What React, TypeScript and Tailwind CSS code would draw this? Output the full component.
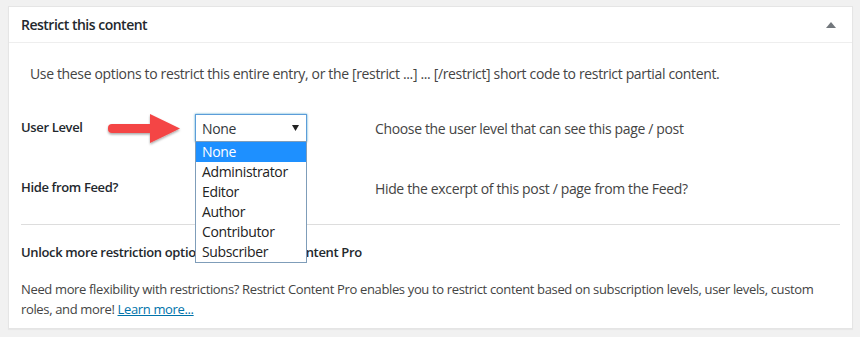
import React from "react";

const options = ["None", "Administrator", "Editor", "Author", "Contributor", "Subscriber"];

export default function App() {
  return (
    <div
      className="w-[860px] h-[337px] bg-[#f1f1f1] pt-[6px] pl-[8px] overflow-hidden"
      style={{ fontFamily: '"Open Sans", "Noto Sans", Arial, sans-serif' }}
    >
      <div className="w-[845px] h-[323px] bg-white border border-[#e5e5e5] shadow-[0_1px_1px_rgba(0,0,0,0.04)] flex flex-col">
        <div className="h-[36px] border-b border-[#eeeeee] flex items-center justify-between pl-[12px] pr-[16px]">
          <span className="text-[14px] font-semibold text-[#23282d] tracking-[-0.5px]">Restrict this content</span>
          <svg width="10" height="6" viewBox="0 0 10 6">
            <polygon points="5,0 10,6 0,6" fill="#72777c" />
          </svg>
        </div>
        <div className="px-[12px] text-[13px] text-[#444] tracking-[-0.35px]">
          <p className="mt-[21px] ml-[9px] leading-[20px] text-[14px]">
            Use these options to restrict this entire entry, or the [restrict ...] ... [/restrict] short code to restrict partial content.
          </p>
          <div className="mt-[14px] relative">
            <div className="h-[60px] flex items-center">
              <div className="w-[174px] font-semibold text-[#23282d]">User Level</div>
              <div className="relative">
                <div className="w-[112px] h-[28px] border border-[#5b9dd9] shadow-[0_0_2px_rgba(30,140,190,0.8)] flex items-center justify-between pl-[6px] pr-[7px] text-[14px] text-[#32373c] bg-white">
                  <span>None</span>
                  <svg width="7" height="6" viewBox="0 0 7 6">
                    <polygon points="0,0 7,0 3.5,6" fill="#222" />
                  </svg>
                </div>
                <div className="absolute left-0 top-[27px] w-[112px] bg-white border border-[#7f9db9] z-10 text-[14px] text-[#222]">
                  {options.map((o, i) => (
                    <div
                      key={o}
                      className={
                        i === 0
                          ? "h-[20px] leading-[20px] pl-[6px] bg-[#1e90ff] text-white"
                          : "h-[20px] leading-[20px] pl-[6px]"
                      }
                    >
                      {o}
                    </div>
                  ))}
                </div>
              </div>
              <div className="ml-[68px] text-[14px]">Choose the user level that can see this page / post</div>
            </div>
            <div className="h-[60px] flex items-center">
              <div className="w-[174px] font-semibold text-[#23282d]">Hide from Feed?</div>
              <div className="w-[180px]">
                <div className="w-[16px] h-[16px] border border-[#b4b9be] bg-white" />
              </div>
              <div className="text-[14px]">Hide the excerpt of this post / page from the Feed?</div>
            </div>
            <svg className="absolute left-[85px] top-[15px]" width="76" height="34" viewBox="0 0 76 34">
              <defs>
                <filter id="sh" x="-20%" y="-20%" width="140%" height="160%">
                  <feDropShadow dx="0" dy="1.5" stdDeviation="1.2" floodColor="#000" floodOpacity="0.35" />
                </filter>
              </defs>
              <g filter="url(#sh)">
                <rect x="2" y="11" width="46" height="9" rx="4" fill="#f44545" />
                <polygon points="44,1 74,15.5 44,30" fill="#f44545" />
              </g>
            </svg>
          </div>
          <div className="mt-[6px] border-t border-[#dddddd]" />
          <div className="mt-[17px] leading-[20px] font-semibold text-[#23282d]">
            Unlock more restriction options with Restrict Content Pro
          </div>
          <p className="mt-[17px] leading-[20px]">
            Need more flexibility with restrictions? Restrict Content Pro enables you to restrict content based on subscription levels, user levels, custom roles, and more!{" "}
            <a className="text-[#0073aa] underline">Learn more...</a>
          </p>
        </div>
      </div>
    </div>
  );
}
